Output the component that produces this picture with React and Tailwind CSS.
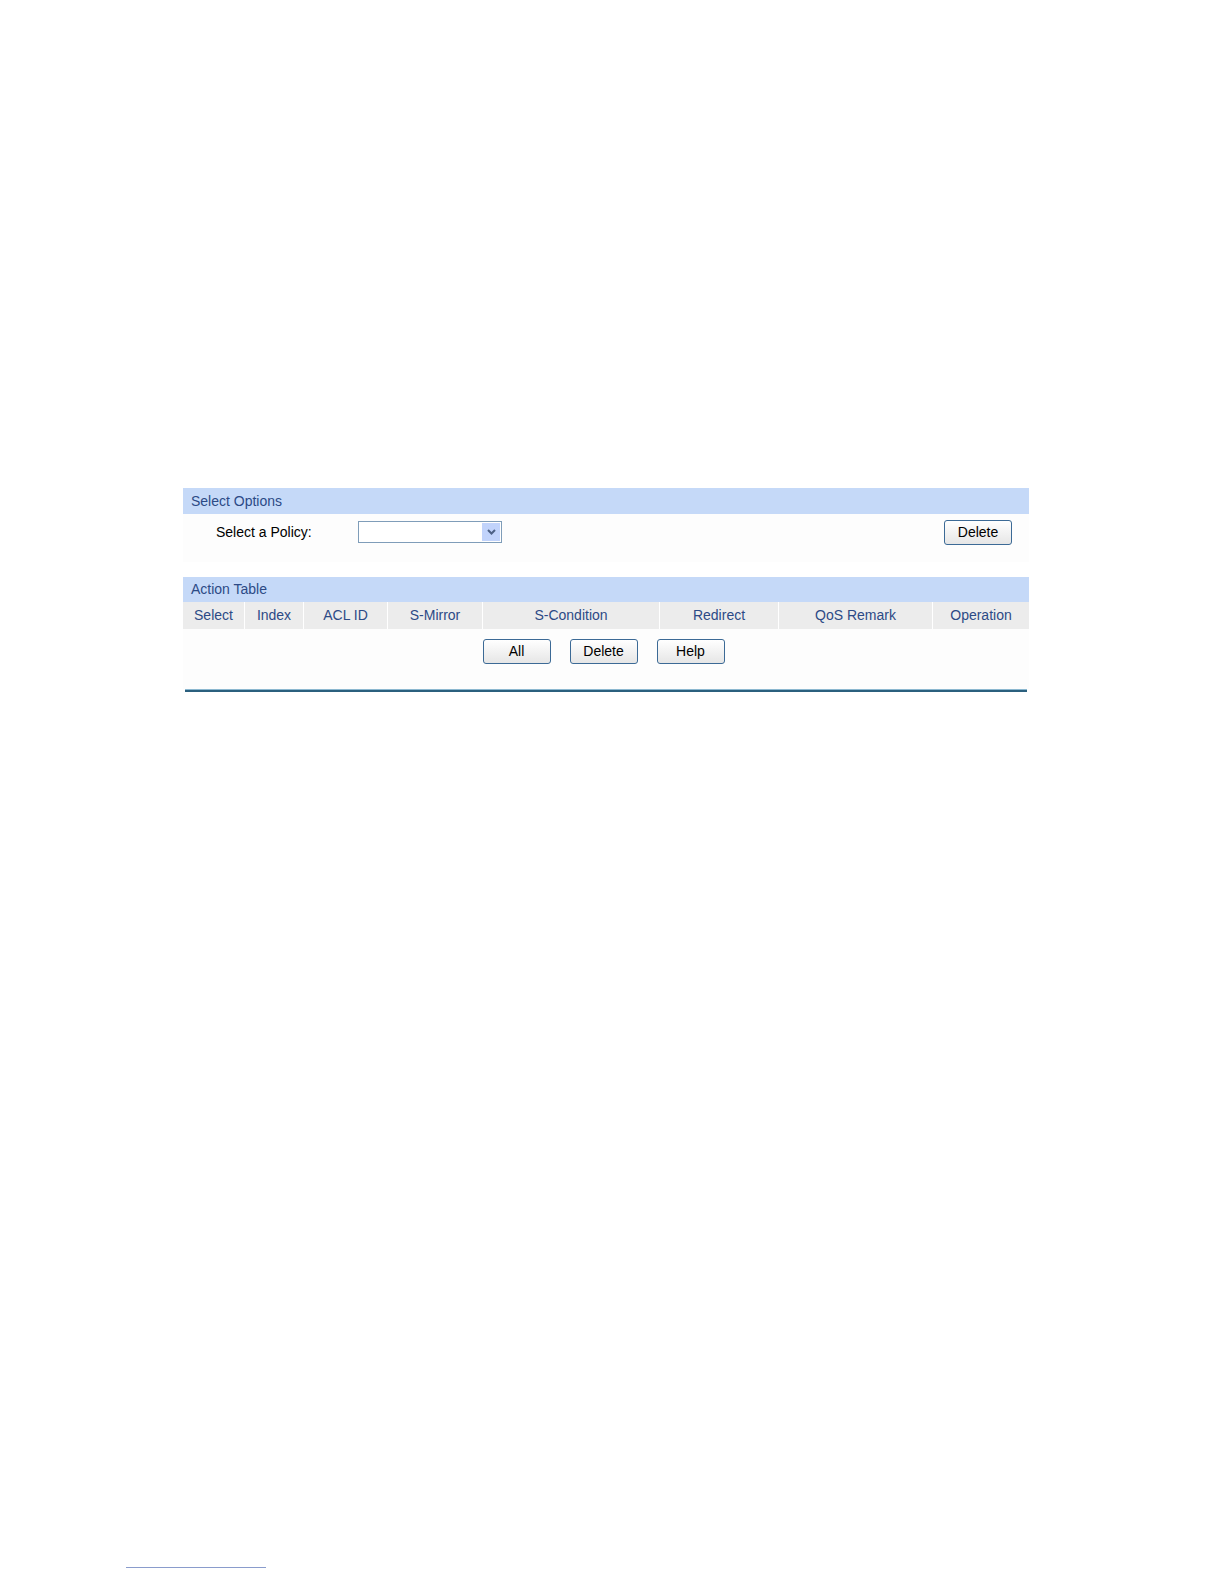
import React from "react";

const btn =
  "h-[25px] w-[68px] rounded-[3px] border border-[#3c6a96] bg-gradient-to-b from-[#ffffff] to-[#e6e6e6] text-[14px] text-black flex items-center justify-center";

export default function App() {
  const cols = [
    ["Select", 61],
    ["Index", 59],
    ["ACL ID", 84],
    ["S-Mirror", 95],
    ["S-Condition", 177],
    ["Redirect", 119],
    ["QoS Remark", 154],
    ["Operation", 97],
  ];
  return (
    <div className="w-[1224px] h-[1584px] bg-white relative" style={{ fontFamily: '"Liberation Sans", Arial, sans-serif' }}>
      <div className="pt-[488px] pl-[183px] w-[1029px]">
        <div className="w-[846px]">
          <div className="h-[26px] bg-[#c5d9f8] flex items-center pl-[8px] text-[14px] text-[#2c4a86]">Select Options</div>
          <div className="h-[48px] bg-[#fdfdfd] flex items-start pt-[7px]">
            <div className="w-[175px] pl-[33px] text-[14px] text-black h-[22px] flex items-center">Select a Policy:</div>
            <div className="w-[144px] h-[22px] border border-[#7f9db9] bg-white flex justify-end p-[1px]">
              <div className="w-[18px] h-full bg-[#c1d3fb] flex items-center justify-center">
                <svg width="9" height="6" viewBox="0 0 9 6"><path d="M1 1 L4.5 4.5 L8 1" fill="none" stroke="#4d6185" strokeWidth="2" /></svg>
              </div>
            </div>
            <div className="flex-1" />
            <div className="mr-[17px] -mt-[1px]"><button className={btn}>Delete</button></div>
          </div>
          <div className="h-[15px]" />
          <div className="h-[25px] bg-[#c5d9f8] flex items-center pl-[8px] text-[14px] text-[#2c4a86]">Action Table</div>
          <div className="flex h-[27px]">
            {cols.map(([n, w], i) => (
              <div key={n} style={{ width: w }} className={"bg-[#ececec] flex items-center justify-center text-[14px] text-[#2c4a86] " + (i > 0 ? "border-l border-[#ffffff]" : "")}>{n}</div>
            ))}
          </div>
          <div className="h-[60px] bg-[#fdfdfd] flex justify-center gap-[19px] pt-[10px] pr-[5px]">
            <button className={btn}>All</button>
            <button className={btn}>Delete</button>
            <button className={btn}>Help</button>
          </div>
          <div className="ml-[2px] w-[842px] h-[3px] border-t border-[#8cb8d0] bg-[#2b607e]" />
        </div>
      </div>
      <div className="absolute left-[126px] top-[1567px] w-[140px] h-px bg-[#8a9ccc]" />
    </div>
  );
}
